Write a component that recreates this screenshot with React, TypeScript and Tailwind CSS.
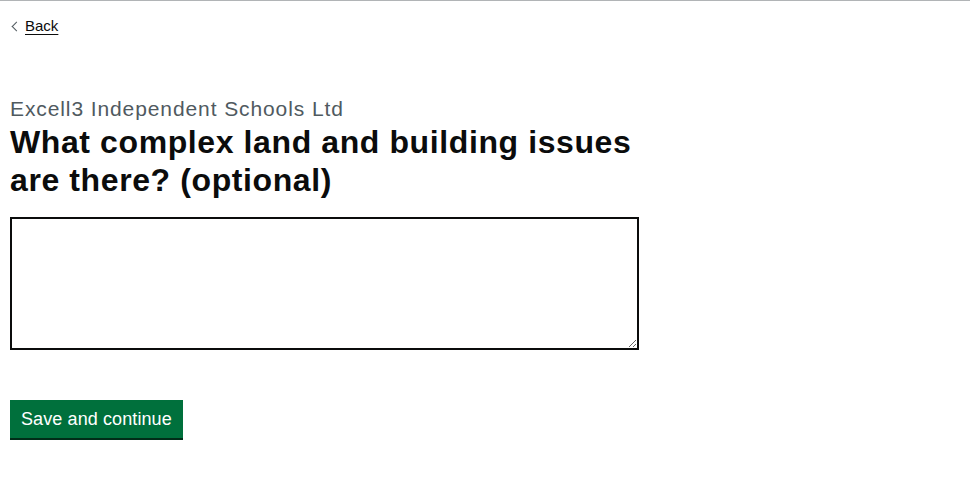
import React from 'react';

const font = { fontFamily: '"Liberation Sans", Arial, sans-serif' };

export default function App() {
    return (
        <div className="min-h-screen bg-white text-[#0b0c0c]" style={font}>
            <div className="border-t border-[#b1b4b6]" />
            <div className="px-[10px]">
                {/* Back link */}
                <a href="#" className="mt-[15px] inline-flex items-center gap-[5px] text-[15px] leading-[20px] text-[#0b0c0c] underline underline-offset-[3px] decoration-1">
                    <span className="inline-block h-[7px] w-[7px] -rotate-45 border-l border-t border-[#505a5f] ml-[3px] no-underline" />
                    <span>Back</span>
                </a>

                <div className="mt-[59px] w-[640px]">
                    <span className="block text-[21px] leading-[26px] tracking-[0.9px] text-[#505a5f]">Excell3 Independent Schools Ltd</span>
                    <h1 className="mt-[1px] text-[32px] font-bold leading-[38px] tracking-[0.6px]">
                        What complex land and building issues are there? (optional)
                    </h1>
                    <textarea
                        rows={5}
                        className="mt-[18px] block h-[133px] w-[629px] border-2 border-[#0b0c0c] p-[5px] text-[19px] outline-none"
                    />
                    <button className="mt-[50px] bg-[#00703c] px-[11px] pt-[8px] pb-[7px] text-[18px] leading-[23px] tracking-[0.1px] text-white shadow-[0_2px_0_#002d18]">
                        Save and continue
                    </button>
                </div>
            </div>
        </div>
    );
}
